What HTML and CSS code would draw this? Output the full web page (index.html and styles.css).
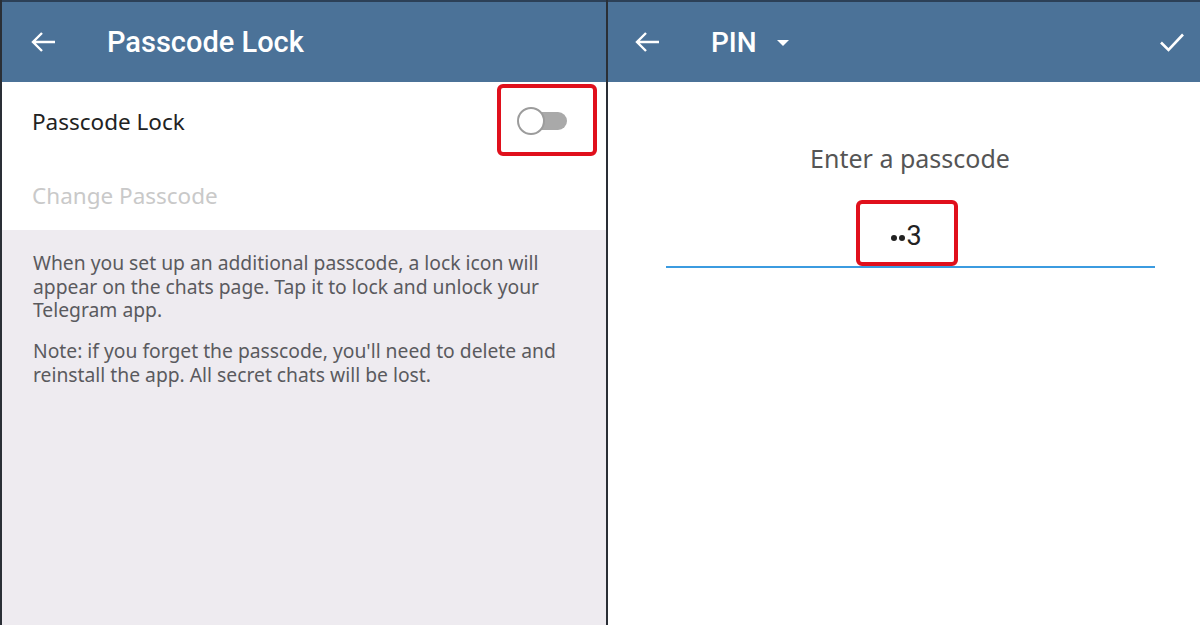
FILE: index.html
```html
<!DOCTYPE html>
<html>
<head>
<meta charset="utf-8" />
<title>Passcode Lock</title>
<link rel="stylesheet" href="styles.css">
</head>
<body>
<div class="screens">
  <div class="screen screen-left">
    <div class="bar">
      <svg class="back" width="26" height="22" viewBox="0 0 26 22"><path d="M25 11H3M12 2L3 11l9 9" fill="none" stroke="#fff" stroke-width="2.4"/></svg>
      <span class="bar-title">Passcode Lock</span>
    </div>
    <div class="list">
      <div class="row row-main">
        <span class="row-label">Passcode Lock</span>
        <div class="mark mark-switch">
          <div class="switch"><span class="knob"></span></div>
        </div>
      </div>
      <div class="row row-off">
        <span class="row-label">Change Passcode</span>
      </div>
    </div>
    <div class="info">
      <p>When you set up an additional passcode, a lock icon will appear on the chats page. Tap it to lock and unlock your Telegram app.</p>
      <p>Note: if you forget the passcode, you'll need to delete and reinstall the app. All secret chats will be lost.</p>
    </div>
  </div>

  <div class="screen screen-right">
    <div class="bar">
      <svg class="back" width="26" height="22" viewBox="0 0 26 22"><path d="M25 11H3M12 2L3 11l9 9" fill="none" stroke="#fff" stroke-width="2.4"/></svg>
      <span class="bar-title bar-pin">PIN</span>
      <svg class="drop" width="14" height="8" viewBox="0 0 14 8"><path d="M1 1h12L7 7z" fill="#fff"/></svg>
      <svg class="check" width="26" height="20" viewBox="0 0 26 20"><path d="M2 10.5l7.5 7.5L24 2.5" fill="none" stroke="#fff" stroke-width="2.6"/></svg>
    </div>
    <div class="pin">
      <div class="pin-label">Enter a passcode</div>
      <div class="pin-field">
        <div class="mark mark-code"><span class="dot"></span><span class="dot"></span>3</div>
      </div>
    </div>
  </div>
</div>
</body>
</html>
```

FILE: styles.css
```css
html,body{margin:0;padding:0;}
body{font-family:'Noto Sans',Roboto,sans-serif;background:#fff;overflow:hidden;}
.screens{display:flex;height:625px;}
.screen{display:flex;flex-direction:column;}
.screen-left{width:604px;border-left:2px solid #2a2f36;background:#eeebf0;}
.screen-right{flex:1;border-left:2px solid #2a2f36;background:#fff;}

.bar{height:80px;border-top:2px solid #2c4057;background:#4b7298;display:flex;align-items:center;color:#fff;flex-shrink:0;font-family:Roboto,sans-serif;}
.back{margin-left:28px;}
.bar-title{margin-left:51px;font-size:29px;font-weight:500;}
.screen-right .back{margin-left:26px;}
.bar-pin{margin-left:51px;font-size:28px;}
.drop{margin-left:19px;margin-top:2px;}
.check{margin-left:auto;margin-right:15px;}

.list{background:#fff;}
.row{display:flex;align-items:center;padding-left:30px;}
.row-main{height:78px;}
.row-off{height:70px;}
.row-label{font-size:22.5px;color:#222;}
.row-off .row-label{color:#c9c9c9;}

.mark{border:4px solid #e0101c;border-radius:6px;box-sizing:border-box;}
.mark-switch{margin-left:auto;margin-right:9px;width:100px;height:72px;display:flex;align-items:center;padding-left:18px;margin-top:-2px;}
.switch{position:relative;width:48px;height:18px;border-radius:9px;background:#a9a9a9;margin-top:2px;}
.knob{position:absolute;left:-2px;top:-5px;width:24px;height:24px;border-radius:50%;background:#fff;border:2px solid #9c9c9c;}

.info{padding:21px 0 0 31px;width:535px;}
.info p{margin:0 0 17px;font-size:19.3px;line-height:23.7px;color:#5a5a5e;}

.pin{display:flex;flex-direction:column;}
.pin-label{margin-top:59px;text-align:center;padding-left:12px;font-size:25px;color:#555;}
.pin-field{margin:25px 45px 0 58px;border-bottom:2px solid #3b9be0;display:flex;justify-content:center;padding-right:8px;}
.mark-code{width:102px;height:66px;display:flex;align-items:center;justify-content:center;font-size:27px;color:#222;padding-top:6px;font-family:Roboto,sans-serif;}
.dot{width:6px;height:6px;border-radius:50%;background:#222;margin-right:2px;margin-top:4px;}
.dot + .dot{margin-right:1px;}
```
